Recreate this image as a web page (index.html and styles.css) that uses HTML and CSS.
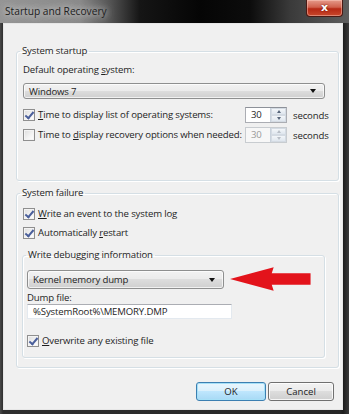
FILE: index.html
```html
<!DOCTYPE html>
<html lang="en">
<head>
    <meta charset="UTF-8">
    <meta name="viewport" content="width=device-width, initial-scale=1.0">
    <title>Startup and Recovery</title>
    <link rel="stylesheet" href="styles.css">
</head>
<body>
    <div class="window">
        <div class="titlebar">
            <span class="title">Startup and Recovery</span>
            <button class="close-btn">x</button>
        </div>

        <div class="client">
            <fieldset class="group startup">
                <legend>System startup</legend>
                <div class="field-label">Default operating <u>s</u>ystem:</div>
                <div class="combo wide">
                    <span>Windows 7</span>
                    <span class="combo-arrow"></span>
                </div>

                <div class="time-row first">
                    <label class="check-label">
                        <span class="checkbox checked"></span>
                        <span><u>T</u>ime to display list of operating systems:</span>
                    </label>
                    <div class="spin">
                        <span class="spin-value">30</span>
                        <span class="spin-btns">
                            <span class="spin-up"></span>
                            <span class="spin-down"></span>
                        </span>
                    </div>
                    <span>seconds</span>
                </div>

                <div class="time-row">
                    <label class="check-label">
                        <span class="checkbox"></span>
                        <span>Time to <u>d</u>isplay recovery options when needed:</span>
                    </label>
                    <div class="spin disabled">
                        <span class="spin-value">30</span>
                        <span class="spin-btns">
                            <span class="spin-up"></span>
                            <span class="spin-down"></span>
                        </span>
                    </div>
                    <span>seconds</span>
                </div>
            </fieldset>

            <fieldset class="group failure">
                <legend>System failure</legend>
                <label class="check-label row">
                    <span class="checkbox checked"></span>
                    <span><u>W</u>rite an event to the system log</span>
                </label>
                <label class="check-label row second">
                    <span class="checkbox checked"></span>
                    <span>Automatically <u>r</u>estart</span>
                </label>

                <fieldset class="group debug">
                    <legend>Write debugging information</legend>
                    <div class="dump-row">
                        <div class="combo narrow">
                            <span>Kernel memory dump</span>
                            <span class="combo-arrow"></span>
                        </div>
                        <svg class="red-arrow" width="84" height="26" viewBox="0 0 84 26">
                            <path d="M0 13 L45 1 L43 7 L83 7 L83 19 L43 19 L45 25 Z" fill="#e3131b"/>
                        </svg>
                    </div>
                    <div class="field-label dump-label">Dump file:</div>
                    <div class="textbox">%SystemRoot%\MEMORY.DMP</div>
                    <label class="check-label row overwrite">
                        <span class="checkbox checked"></span>
                        <span><u>O</u>verwrite any existing file</span>
                    </label>
                </fieldset>
            </fieldset>

            <div class="buttons">
                <button class="btn default">OK</button>
                <button class="btn cancel">Cancel</button>
            </div>
        </div>
    </div>
</body>
</html>
```

FILE: styles.css
```css
* {
    margin: 0;
    padding: 0;
    box-sizing: border-box;
}

body {
    font-family: 'Open Sans', 'Noto Sans', sans-serif;
    font-size: 9.6px;
    letter-spacing: -0.15px;
    color: #1e1e1e;
    background: #222;
}

u {
    text-decoration: underline;
    text-underline-offset: 1px;
}

.window {
    width: 349px;
    height: 414px;
    display: flex;
    flex-direction: column;
    padding-bottom: 4px;
    background: linear-gradient(to right, #4a4a4a 0, #2e2e2e 3px, #262626 340px, #1c1c1c 343px, #3a3a3a 349px);
}

/* title bar */
.titlebar {
    height: 23px;
    display: flex;
    align-items: flex-start;
    justify-content: space-between;
    background: linear-gradient(to right, #959595 0, #8a8a8a 80px, #505050 112px, #151515 140px, #050505 200px, #0c0c0c 250px, #3a3a3a 290px, #5e5e5e 349px);
}

.title {
    padding: 3px 0 0 5px;
    font-size: 10.2px;
    letter-spacing: 0;
    line-height: 16px;
    color: #202020;
    text-shadow: 0 0 6px #d8d8d8, 0 0 10px #c8c8c8;
}

.close-btn {
    width: 37px;
    height: 17px;
    margin-right: 6px;
    border: 1px solid #4a1a14;
    border-top: none;
    border-radius: 0 0 4px 4px;
    background: linear-gradient(to bottom, #e59a8a 0, #d0604c 45%, #b62814 55%, #c8482c 100%);
    box-shadow: inset 0 0 0 1px rgba(255, 210, 200, 0.45);
    color: #fff;
    font-family: 'DejaVu Sans', sans-serif;
    font-weight: bold;
    font-size: 11px;
    line-height: 14px;
    text-shadow: 0 0 2px #5a0c04;
}

/* client area */
.client {
    flex: 1;
    margin: 0 6px 0 3px;
    background: #f0f0f0;
    border: 1px solid #e6e6e6;
    padding: 20px 3px 0 12px;
    display: flex;
    flex-direction: column;
}

.group {
    min-width: 0;
    border: 1px solid #d5dfe5;
    border-radius: 3px;
    box-shadow: 1px 1px 0 #fff, inset 1px 1px 0 #fff;
    padding: 0 13px 0 6px;
}

.group legend {
    margin-left: -3px;
    padding: 0 2px;
    line-height: 14px;
}

.startup {
    padding-top: 5px;
    padding-bottom: 37px;
}

.field-label {
    line-height: 14px;
}

.combo {
    display: flex;
    align-items: center;
    justify-content: space-between;
    border: 1px solid #8e8f8f;
    border-radius: 3px;
    background: linear-gradient(to bottom, #f2f2f2 0, #ebebeb 50%, #dddddd 50%, #cfcfcf 100%);
    box-shadow: inset 0 0 0 1px rgba(255, 255, 255, 0.7);
    padding: 0 8px 0 5px;
}

.combo.wide {
    margin-top: 6px;
    height: 16px;
}

.combo.narrow {
    width: 203px;
    height: 19px;
}

.combo-arrow {
    width: 0;
    height: 0;
    border-left: 3.5px solid transparent;
    border-right: 3.5px solid transparent;
    border-top: 4px solid #111;
}

.time-row {
    display: grid;
    grid-template-columns: 216px 42px auto;
    column-gap: 6px;
    align-items: center;
    height: 16px;
    margin-top: 4px;
}

.time-row.first {
    margin-top: 8px;
}

.check-label {
    display: flex;
    align-items: center;
    gap: 3px;
    white-space: nowrap;
    line-height: 14px;
}

.checkbox {
    width: 12px;
    height: 12px;
    flex: none;
    border: 1px solid #8f8f8f;
    background: linear-gradient(135deg, #dcdcdc 0, #f4f4f4 60%, #ffffff 100%);
    box-shadow: inset 0 0 0 1px #f4f4f4;
    position: relative;
}

.checkbox.checked::after {
    content: "";
    position: absolute;
    left: 3px;
    top: 0px;
    width: 3px;
    height: 7px;
    border-right: 2px solid #4a5f9b;
    border-bottom: 2px solid #4a5f9b;
    transform: rotate(40deg);
}

.spin {
    display: flex;
    height: 16px;
    border: 1px solid #abadb3;
    border-top-color: #8d9199;
    background: #fff;
}

.spin-value {
    flex: 1;
    padding-left: 5px;
    line-height: 14px;
}

.spin-btns {
    width: 16px;
    display: flex;
    flex-direction: column;
    border-left: 1px solid #c9d2dc;
}

.spin-up,
.spin-down {
    flex: 1;
    display: flex;
    align-items: center;
    justify-content: center;
    background: linear-gradient(to bottom, #f3f6f9, #dfe6ee);
    border: 1px solid #d4dbe3;
}

.spin-up::after {
    content: "";
    border-left: 2.5px solid transparent;
    border-right: 2.5px solid transparent;
    border-bottom: 3px solid #58667a;
}

.spin-down::after {
    content: "";
    border-left: 2.5px solid transparent;
    border-right: 2.5px solid transparent;
    border-top: 3px solid #58667a;
}

.spin.disabled {
    border-color: #c8ccd0;
    background: #f7f7f7;
    color: #9a9a9a;
}

.spin.disabled .spin-up::after {
    border-bottom-color: #b8bec6;
}

.spin.disabled .spin-down::after {
    border-top-color: #b8bec6;
}

.failure {
    margin-top: 5px;
    padding-top: 7px;
    padding-bottom: 9px;
}

.row {
    height: 14px;
}

.row.second {
    margin-top: 5px;
}

.debug {
    margin: 8px 0 0 -1px;
    padding: 8px 12px 9px 4px;
}

.debug legend {
    margin-left: -1px;
}

.dump-row {
    display: flex;
    align-items: center;
    gap: 6px;
}

.red-arrow {
    margin: -4px 0 -3px 0;
}

.dump-label {
    margin-top: 3px;
    line-height: 12px;
}

.textbox {
    width: 205px;
    height: 15px;
    border: 1px solid #e3e9ef;
    border-top-color: #abadb3;
    background: #fff;
    padding-left: 5px;
    line-height: 13px;
}

.overwrite {
    margin-top: 15px;
}

/* buttons */
.buttons {
    display: flex;
    justify-content: flex-end;
    gap: 2px;
    margin-top: 14px;
    padding-right: 5px;
}

.btn {
    height: 19px;
    border: 1px solid #707070;
    border-radius: 3px;
    background: linear-gradient(to bottom, #f2f2f2 0, #ebebeb 50%, #dddddd 50%, #cfcfcf 100%);
    box-shadow: inset 0 0 0 1px rgba(255, 255, 255, 0.8);
    font-family: inherit;
    font-size: 9.6px;
    color: #1e1e1e;
}

.btn.default {
    width: 70px;
    border-color: #3c7fb1;
    box-shadow: inset 0 0 0 1px #a6e0f7;
    background: linear-gradient(to bottom, #eaf6fd 0, #d9f0fc 50%, #bee6fd 50%, #a7d9f5 100%);
}

.btn.cancel {
    width: 66px;
}
```
